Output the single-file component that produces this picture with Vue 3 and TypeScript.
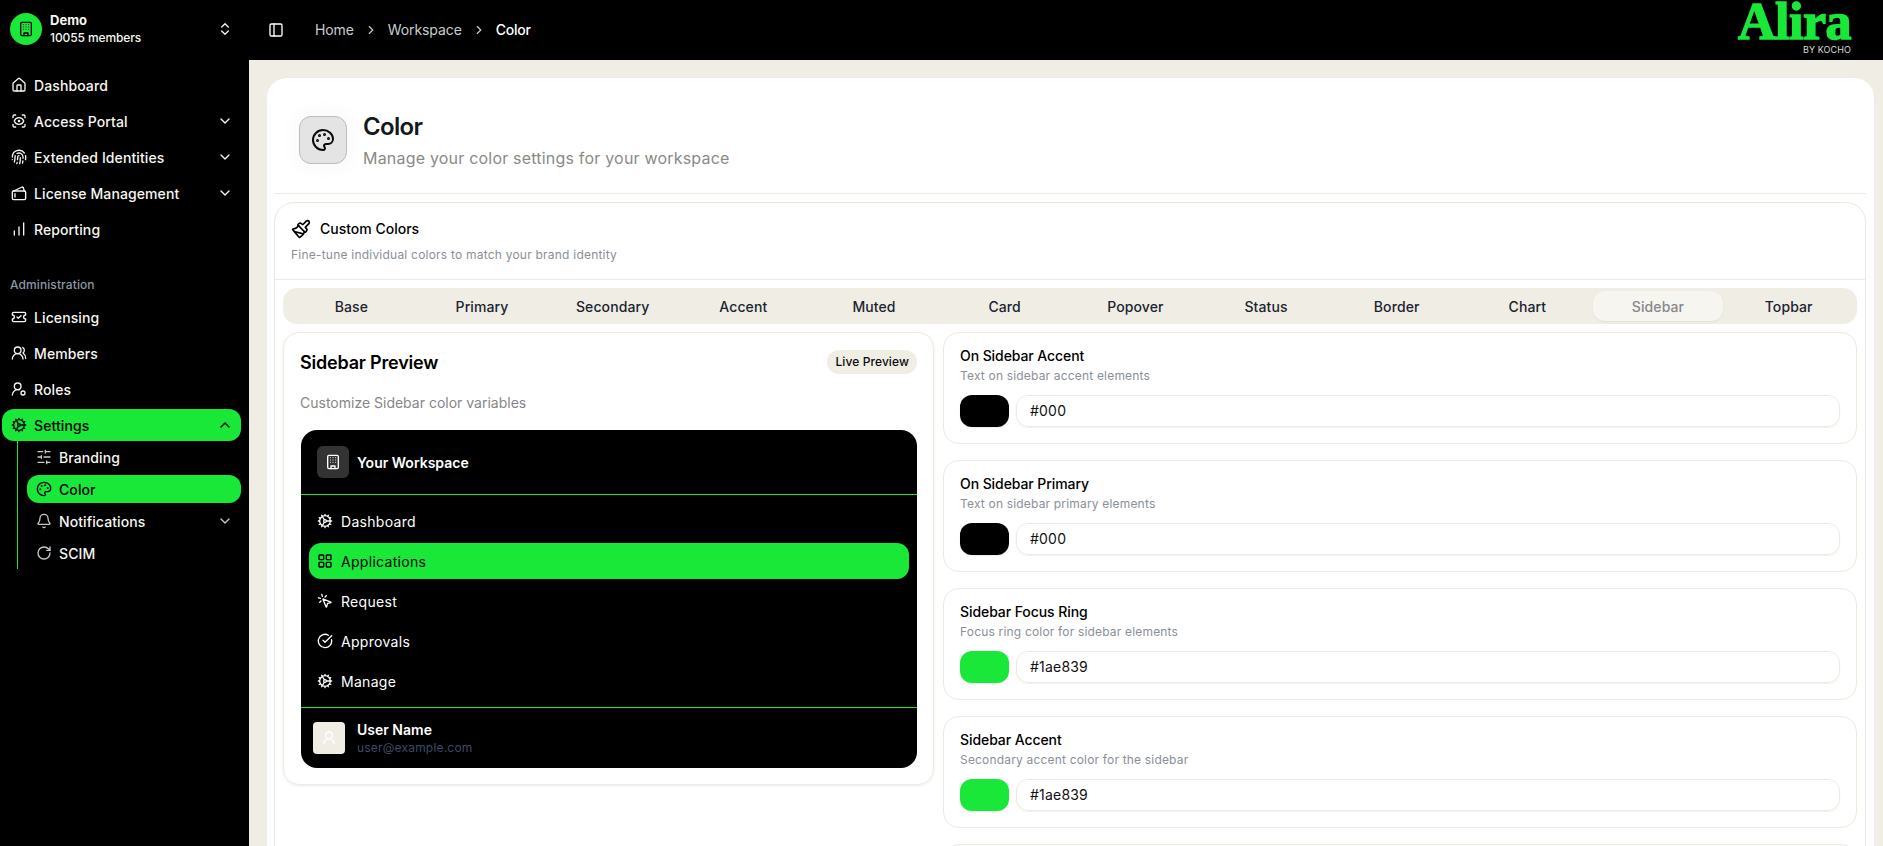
<style scoped>
.layout {
  display: flex;
  height: 846px;
  overflow: hidden;
  background-color: #f0ede5;
  font-family: Inter, 'Open Sans', sans-serif;
  color: #0a0a0a;
}
svg {
  display: block;
  flex: none;
  fill: none;
  stroke: currentColor;
  stroke-width: 2;
  stroke-linecap: round;
  stroke-linejoin: round;
}
.sidebar {
  width: 249px;
  flex: none;
  background-color: #000;
  color: #f7f6f1;
  padding: 13px 8px 0 2px;
  box-sizing: border-box;
}
.workspace {
  display: flex;
  align-items: center;
  height: 32px;
  padding-left: 8px;
  margin-bottom: 24px;
}
.workspace-logo {
  width: 32px;
  height: 32px;
  border-radius: 50%;
  background-color: #1ae839;
  color: #000;
  display: flex;
  align-items: center;
  justify-content: center;
  margin-right: 8px;
}
.workspace-text {
  flex: 1;
  font-size: 12px;
  line-height: 18px;
}
.workspace-name {
  font-weight: 700;
  font-size: 13px;
}
.workspace-members {
  font-weight: 500;
  letter-spacing: -0.1px;
}
.nav-item {
  display: flex;
  align-items: center;
  height: 32px;
  margin-bottom: 4px;
  padding-left: 9px;
  padding-right: 8px;
  border-radius: 12px;
  font-size: 14px;
  font-weight: 500;
  letter-spacing: 0.1px;
}
.nav-item .label {
  flex: 1;
  margin-left: 7px;
}
.nav-item.active {
  background-color: #1ae839;
  color: #000;
}
.group-label {
  margin: 32px 0 8px 8px;
  font-size: 12px;
  line-height: 16px;
  font-weight: 500;
  color: #8d97a6;
  letter-spacing: 0.1px;
}
.sub-nav {
  margin: 0 0 0 15px;
  padding: 2px 0 2px 9px;
  border-left: 1px solid #1ae839;
}
.sub-item {
  display: flex;
  align-items: center;
  height: 28px;
  margin-bottom: 4px;
  padding-left: 9px;
  padding-right: 8px;
  border-radius: 12px;
  font-size: 14px;
  font-weight: 500;
  letter-spacing: 0.1px;
}
.sub-item .label {
  flex: 1;
  margin-left: 7px;
}
.sub-item.active {
  background-color: #1ae839;
  color: #000;
}
.sub-item:last-child {
  margin-bottom: 0;
}
.dim {
  color: #c8c8c8;
}
.main {
  flex: 1;
  min-width: 0;
}
.topbar {
  height: 60px;
  background-color: #000;
  color: #fff;
  display: flex;
  align-items: center;
  padding-left: 19px;
  padding-right: 32px;
}
.crumbs {
  display: flex;
  align-items: center;
  margin-left: 31px;
  padding-bottom: 1px;
  font-size: 14px;
  color: #c9ccd1;
  letter-spacing: -0.1px;
  flex: 1;
}
.crumbs svg {
  margin: 0 10px;
}
.crumbs .current {
  color: #fff;
  font-weight: 500;
  letter-spacing: -0.25px;
}
.logo {
  align-self: flex-start;
  text-align: right;
  height: 60px;
}
.logo-word {
  font-family: 'Liberation Serif', serif;
  font-size: 52px;
  line-height: 40px;
  height: 40px;
  padding-top: 2px;
  font-weight: 700;
  color: #1ae839;
  -webkit-text-stroke: 1.5px #1ae839;
  letter-spacing: -0.5px;
}
.logo-by {
  font-size: 9px;
  line-height: 10px;
  margin-top: 3px;
  color: #d8d8d8;
  letter-spacing: 0.1px;
}
.content {
  padding: 18px 9px 0 18px;
}
.page {
  background-color: #fff;
  border-radius: 20px;
  padding: 0 8px 0 7px;
}
.page-head {
  height: 116px;
  display: flex;
  align-items: center;
  padding: 8px 0 0 25px;
  border-bottom: 1px solid #efeade;
  box-sizing: border-box;
}
.page-icon {
  width: 48px;
  height: 48px;
  box-sizing: border-box;
  border-radius: 12px;
  border: 1px solid #bdbdbd;
  background-color: #e4e4e4;
  display: flex;
  align-items: center;
  justify-content: center;
  margin-right: 16px;
  box-shadow: 0 0 16px 8px rgba(0, 0, 0, 0.02);
}
.page-title {
  font-size: 24px;
  line-height: 32px;
  font-weight: 600;
  color: #141a1c;
  letter-spacing: -0.7px;
}
.page-sub {
  margin-top: 4px;
  font-size: 16px;
  line-height: 22px;
  color: #8a8a86;
  letter-spacing: 0.2px;
}
.custom {
  margin-top: 8px;
  border: 1px solid #e9e8e4;
  border-radius: 20px;
  padding: 0 8px;
}
.custom-head {
  height: 77px;
  margin: 0 -8px;
  padding: 16px 16px 0;
  box-sizing: border-box;
  border-bottom: 1px solid #efeade;
}
.custom-title {
  display: flex;
  align-items: center;
  font-size: 14px;
  line-height: 20px;
  font-weight: 500;
  color: #000;
}
.custom-title svg {
  margin-right: 9px;
}
.custom-desc {
  margin-top: 8px;
  font-size: 12px;
  line-height: 16px;
  color: #8a8f98;
  letter-spacing: 0.22px;
}
.tabs {
  display: grid;
  grid-template-columns: repeat(12, 1fr);
  height: 36px;
  margin-top: 8px;
  padding: 3px;
  box-sizing: border-box;
  background-color: #f0ede5;
  border-radius: 14px;
}
.tab {
  display: flex;
  align-items: center;
  justify-content: center;
  font-size: 14px;
  font-weight: 500;
  color: #1b2430;
  border-radius: 12px;
  letter-spacing: 0.1px;
}
.tab.active {
  background-color: #f7f5f0;
  color: #86888a;
  box-shadow: 0 1px 2px rgba(0, 0, 0, 0.06);
}
.panels {
  display: grid;
  grid-template-columns: 651px 1fr;
  gap: 9px;
  margin-top: 8px;
  align-items: start;
}
.preview-card {
  height: 453px;
  box-sizing: border-box;
  border: 1px solid #efeade;
  border-radius: 16px;
  padding: 16px 16px 0;
  box-shadow: 0 1px 3px rgba(0, 0, 0, 0.08);
}
.preview-head {
  display: flex;
  align-items: center;
  justify-content: space-between;
  height: 26px;
}
.preview-title {
  font-size: 18px;
  font-weight: 600;
  color: #000;
  letter-spacing: -0.2px;
}
.badge {
  background-color: #f0ede5;
  border-radius: 12px;
  padding: 0 8px;
  height: 24px;
  line-height: 24px;
  font-size: 12px;
  font-weight: 500;
  letter-spacing: 0.1px;
}
.preview-sub {
  margin-top: 18px;
  font-size: 14px;
  line-height: 20px;
  color: #86868a;
}
.fake-sidebar {
  margin: 17px 0 0 1px;
  background-color: #000;
  border-radius: 16px;
  height: 338px;
  color: #fff;
  display: flex;
  flex-direction: column;
}
.fake-head {
  height: 65px;
  box-sizing: border-box;
  flex: none;
  display: flex;
  align-items: center;
  padding-left: 16px;
  border-bottom: 1px solid #1ae839;
  font-size: 14px;
  font-weight: 600;
}
.fake-icon {
  width: 32px;
  height: 32px;
  background-color: #333;
  border-radius: 6px;
  display: flex;
  align-items: center;
  justify-content: center;
  margin-right: 8px;
}
.fake-nav {
  flex: 1;
  padding: 8px 8px 0;
  display: flex;
  flex-direction: column;
  gap: 4px;
}
.fake-item {
  display: flex;
  align-items: center;
  height: 36px;
  padding-left: 8px;
  border-radius: 12px;
  font-size: 14px;
  letter-spacing: 0.3px;
}
.fake-item svg {
  margin-right: 8px;
}
.fake-item.active {
  background-color: #1ae839;
  color: #000;
}
.fake-user {
  height: 61px;
  box-sizing: border-box;
  flex: none;
  display: flex;
  align-items: center;
  padding-left: 12px;
  border-top: 1px solid #1ae839;
}
.fake-avatar {
  width: 32px;
  height: 32px;
  background-color: #f0ede5;
  color: #fff;
  border-radius: 4px;
  display: flex;
  align-items: center;
  justify-content: center;
  margin-right: 12px;
}
.fake-name {
  font-size: 14px;
  line-height: 18px;
  font-weight: 600;
  padding-top: 1px;
}
.fake-mail {
  font-size: 12px;
  line-height: 18px;
  color: #3e4a66;
  letter-spacing: 0.2px;
}
.fields {
  display: flex;
  flex-direction: column;
  gap: 16px;
}
.field {
  height: 112px;
  flex: none;
  box-sizing: border-box;
  border: 1px solid #efeade;
  border-radius: 16px;
  padding: 13px 16px 0;
}
.field-title {
  font-size: 14px;
  line-height: 20px;
  font-weight: 500;
  color: #000;
  letter-spacing: -0.08px;
}
.field-desc {
  margin-top: 2px;
  font-size: 12px;
  line-height: 16px;
  color: #8a8f98;
  letter-spacing: 0.18px;
}
.field-row {
  display: flex;
  gap: 7px;
  margin-top: 11px;
}
.swatch {
  width: 49px;
  height: 32px;
  border-radius: 12px;
  box-shadow: 0 1px 2px rgba(0, 0, 0, 0.08);
}
.hex {
  flex: 1;
  height: 32px;
  box-sizing: border-box;
  border: 1px solid #efeade;
  border-radius: 12px;
  padding-left: 13px;
  font-size: 14px;
  line-height: 30px;
  color: #111;
  letter-spacing: 0.2px;
  box-shadow: 0 1px 2px rgba(0, 0, 0, 0.06);
}
</style>

<style>
body {
  overflow: hidden;
}
</style>

<template>
  <div class="layout">
    <aside class="sidebar">
      <div class="workspace">
        <div class="workspace-logo">
          <svg width="16" height="16" viewBox="0 0 24 24" v-html="icons.building"></svg>
        </div>
        <div class="workspace-text">
          <div class="workspace-name">Demo</div>
          <div class="workspace-members">10055 members</div>
        </div>
        <svg width="16" height="16" viewBox="0 0 24 24" style="margin-right: 8px" v-html="icons.updown"></svg>
      </div>

      <div v-for="item in mainNav" :key="item.label" class="nav-item">
        <svg width="16" height="16" viewBox="0 0 24 24" v-html="icons[item.icon]"></svg>
        <span class="label">{{ item.label }}</span>
        <svg v-if="item.more" width="16" height="16" viewBox="0 0 24 24" v-html="icons.down"></svg>
      </div>

      <div class="group-label">Administration</div>

      <div v-for="item in adminNav" :key="item.label" class="nav-item">
        <svg width="16" height="16" viewBox="0 0 24 24" v-html="icons[item.icon]"></svg>
        <span class="label">{{ item.label }}</span>
      </div>
      <div class="nav-item active" style="margin-bottom: 0">
        <svg width="16" height="16" viewBox="0 0 24 24" v-html="icons.cog"></svg>
        <span class="label">Settings</span>
        <svg width="16" height="16" viewBox="0 0 24 24" v-html="icons.up"></svg>
      </div>
      <div class="sub-nav">
        <div v-for="item in settingsNav" :key="item.label" class="sub-item" :class="{ active: item.active }">
          <svg width="16" height="16" viewBox="0 0 24 24" :class="{ dim: !item.active }" v-html="icons[item.icon]"></svg>
          <span class="label">{{ item.label }}</span>
          <svg v-if="item.more" class="dim" width="16" height="16" viewBox="0 0 24 24" v-html="icons.down"></svg>
        </div>
      </div>
    </aside>

    <div class="main">
      <header class="topbar">
        <svg width="16" height="16" viewBox="0 0 24 24" v-html="icons.panel"></svg>
        <nav class="crumbs">
          <span>Home</span>
          <svg width="14" height="14" viewBox="0 0 24 24" v-html="icons.right"></svg>
          <span>Workspace</span>
          <svg width="14" height="14" viewBox="0 0 24 24" v-html="icons.right"></svg>
          <span class="current">Color</span>
        </nav>
        <div class="logo">
          <div class="logo-word">Alira</div>
          <div class="logo-by">BY KOCHO</div>
        </div>
      </header>

      <div class="content">
        <div class="page">
          <div class="page-head">
            <div class="page-icon">
              <svg width="24" height="24" viewBox="0 0 24 24" v-html="icons.palette"></svg>
            </div>
            <div>
              <div class="page-title">Color</div>
              <div class="page-sub">Manage your color settings for your workspace</div>
            </div>
          </div>

          <section class="custom">
            <div class="custom-head">
              <div class="custom-title">
                <svg width="20" height="20" viewBox="0 0 24 24" v-html="icons.brush"></svg>
                Custom Colors
              </div>
              <div class="custom-desc">Fine-tune individual colors to match your brand identity</div>
            </div>

            <div class="tabs">
              <div v-for="tab in tabs" :key="tab" class="tab" :class="{ active: tab === 'Sidebar' }">{{ tab }}</div>
            </div>

            <div class="panels">
              <div class="preview-card">
                <div class="preview-head">
                  <div class="preview-title">Sidebar Preview</div>
                  <div class="badge">Live Preview</div>
                </div>
                <div class="preview-sub">Customize Sidebar color variables</div>
                <div class="fake-sidebar">
                  <div class="fake-head">
                    <div class="fake-icon">
                      <svg width="16" height="16" viewBox="0 0 24 24" v-html="icons.building"></svg>
                    </div>
                    Your Workspace
                  </div>
                  <div class="fake-nav">
                    <div v-for="item in previewNav" :key="item.label" class="fake-item" :class="{ active: item.active }">
                      <svg width="16" height="16" viewBox="0 0 24 24" v-html="icons[item.icon]"></svg>
                      {{ item.label }}
                    </div>
                  </div>
                  <div class="fake-user">
                    <div class="fake-avatar">
                      <svg width="16" height="16" viewBox="0 0 24 24" v-html="icons.user"></svg>
                    </div>
                    <div>
                      <div class="fake-name">User Name</div>
                      <div class="fake-mail">user@example.com</div>
                    </div>
                  </div>
                </div>
              </div>

              <div class="fields">
                <div v-for="field in fields" :key="field.title" class="field">
                  <div class="field-title">{{ field.title }}</div>
                  <div class="field-desc">{{ field.desc }}</div>
                  <div class="field-row">
                    <div class="swatch" :style="{ backgroundColor: field.value }"></div>
                    <div class="hex">{{ field.value }}</div>
                  </div>
                </div>
                <!-- next card only peeks in at the bottom of the window -->
                <div class="field"></div>
              </div>
            </div>
          </section>
        </div>
      </div>
    </div>
  </div>
</template>

<script setup lang="ts">
defineOptions({
  name: 'App',
});

const icons: Record<string, string> = {
  building:
    '<rect width="16" height="20" x="4" y="2" rx="2"/><path d="M9 22v-4h6v4"/><path stroke-width="1.5" d="M8 5.5h.01M12 5.5h.01M16 5.5h.01M8 9h.01M12 9h.01M16 9h.01M8 12.5h.01M12 12.5h.01M16 12.5h.01"/>',
  updown: '<path d="m7 15 5 5 5-5M7 9l5-5 5 5"/>',
  down: '<path d="m6 9 6 6 6-6"/>',
  up: '<path d="m18 15-6-6-6 6"/>',
  right: '<path d="m9 18 6-6-6-6"/>',
  house:
    '<path d="M15 21v-8a1 1 0 0 0-1-1h-4a1 1 0 0 0-1 1v8"/><path d="M3 10a2 2 0 0 1 .709-1.528l7-5.999a2 2 0 0 1 2.582 0l7 5.999A2 2 0 0 1 21 10v9a2 2 0 0 1-2 2H5a2 2 0 0 1-2-2z"/>',
  scan:
    '<path d="M3 7V5a2 2 0 0 1 2-2h2M17 3h2a2 2 0 0 1 2 2v2M21 17v2a2 2 0 0 1-2 2h-2M7 21H5a2 2 0 0 1-2-2v-2"/><circle cx="12" cy="12" r="1"/><path d="M18.944 12.33a1 1 0 0 0 0-.66 7.5 7.5 0 0 0-13.888 0 1 1 0 0 0 0 .66 7.5 7.5 0 0 0 13.888 0"/>',
  finger:
    '<path d="M12 10a2 2 0 0 0-2 2c0 1.02-.1 2.51-.26 4M14 13.12c0 2.38 0 6.38-1 8.88M17.29 21.02c.12-.6.43-2.3.5-3.02M2 12a10 10 0 0 1 18-6M2 16h.01M21.8 16c.2-2 .131-5.354 0-6M5 19.5C5.5 18 6 15 6 12a6 6 0 0 1 .34-2M8.65 22c.21-.66.45-1.32.57-2M9 6.8a6 6 0 0 1 9 5.2v2"/>',
  wallet:
    '<rect width="20" height="13" x="2" y="9" rx="2"/><path d="M4 9 16 3.4A1.5 1.5 0 0 1 18.5 4.5L20 9"/><path d="M6 13v5"/>',
  chart: '<path d="M5 21v-6M12 21V9M19 21V3"/>',
  ticket:
    '<path d="M2 9a3 3 0 0 1 0 6v2a2 2 0 0 0 2 2h16a2 2 0 0 0 2-2v-2a3 3 0 0 1 0-6V7a2 2 0 0 0-2-2H4a2 2 0 0 0-2 2Z"/><path d="m9 12 2 2 4-4"/>',
  users:
    '<path d="M18 21a8 8 0 0 0-16 0"/><circle cx="10" cy="8" r="5"/><path d="M22 20c0-3.37-2-6.5-4-8a5 5 0 0 0-.45-8.3"/>',
  roles: '<path d="M2 21a8 8 0 0 1 10.434-7.62"/><circle cx="10" cy="8" r="5"/><circle cx="18" cy="18" r="3"/>',
  cog:
    '<path d="M12 20a8 8 0 1 0 0-16 8 8 0 0 0 0 16ZM12 14a2 2 0 1 0 0-4 2 2 0 0 0 0 4ZM12 2v2M12 22v-2M17 20.66l-1-1.73M11 10.27 7 3.34M20.66 17l-1.73-1M3.34 7l1.73 1M14 12h8M2 12h2M20.66 7l-1.73 1M3.34 17l1.73-1M17 3.34l-1 1.73M11 13.73l-4 6.93"/>',
  sliders:
    '<path d="M21 4h-7M10 4H3M21 12h-9M8 12H3M21 20h-5M12 20H3M14 2v4M8 10v4M16 18v4"/>',
  palette:
    '<path d="M12 22a1 1 0 0 1 0-20 10 9 0 0 1 10 9 5 5 0 0 1-5 5h-2.25a1.75 1.75 0 0 0-1.4 2.8l.3.4a1.75 1.75 0 0 1-1.4 2.8z"/><circle cx="13.5" cy="6.5" r=".5" fill="currentColor"/><circle cx="17.5" cy="10.5" r=".5" fill="currentColor"/><circle cx="6.5" cy="12.5" r=".5" fill="currentColor"/><circle cx="8.5" cy="7.5" r=".5" fill="currentColor"/>',
  bell:
    '<path d="M10.268 21a2 2 0 0 0 3.464 0"/><path d="M3.262 15.326A1 1 0 0 0 4 17h16a1 1 0 0 0 .74-1.673C19.41 13.956 18 12.499 18 8A6 6 0 0 0 6 8c0 4.499-1.411 5.956-2.738 7.326"/>',
  rotate: '<path d="M21 12a9 9 0 1 1-9-9c2.52 0 4.93 1 6.74 2.74L21 8"/><path d="M21 3v5h-5"/>',
  panel: '<rect width="18" height="18" x="3" y="3" rx="2"/><path d="M9 3v18"/>',
  brush:
    '<path d="m14.622 17.897-10.68-2.913"/><path d="M18.376 2.622a1 1 0 1 1 3.002 3.002L17.36 9.643a.5.5 0 0 0 0 .707l.944.944a2.41 2.41 0 0 1 0 3.408l-.944.944a.5.5 0 0 1-.707 0L8.354 7.348a.5.5 0 0 1 0-.707l.944-.944a2.41 2.41 0 0 1 3.408 0l.944.944a.5.5 0 0 0 .707 0z"/><path d="M9 8c-1.804 2.71-3.97 3.46-6.583 3.948a.507.507 0 0 0-.302.819l7.32 8.883a1 1 0 0 0 1.185.204C12.735 20.405 16 16.792 16 15"/>',
  grid:
    '<rect width="7" height="7" x="3" y="3" rx="1"/><rect width="7" height="7" x="14" y="3" rx="1"/><rect width="7" height="7" x="14" y="14" rx="1"/><rect width="7" height="7" x="3" y="14" rx="1"/>',
  click:
    '<path d="M14 4.1 12 6M5.1 8l-2.9-.8M6 12l-1.9 2M7.2 2.2 8 5.1"/><path d="M9.037 9.69a.498.498 0 0 1 .653-.653l11 4.5a.5.5 0 0 1-.074.949l-4.349 1.041a1 1 0 0 0-.74.739l-1.04 4.35a.5.5 0 0 1-.95.074z"/>',
  check: '<path d="M21.801 10A10 10 0 1 1 17 3.335"/><path d="m9 11 3 3L22 4"/>',
  user: '<circle cx="12" cy="8" r="5"/><path d="M20 21a8 8 0 0 0-16 0"/>',
};

const mainNav = [
  { label: 'Dashboard', icon: 'house' },
  { label: 'Access Portal', icon: 'scan', more: true },
  { label: 'Extended Identities', icon: 'finger', more: true },
  { label: 'License Management', icon: 'wallet', more: true },
  { label: 'Reporting', icon: 'chart' },
];

const adminNav = [
  { label: 'Licensing', icon: 'ticket' },
  { label: 'Members', icon: 'users' },
  { label: 'Roles', icon: 'roles' },
];

const settingsNav = [
  { label: 'Branding', icon: 'sliders' },
  { label: 'Color', icon: 'palette', active: true },
  { label: 'Notifications', icon: 'bell', more: true },
  { label: 'SCIM', icon: 'rotate' },
];

const tabs = [
  'Base',
  'Primary',
  'Secondary',
  'Accent',
  'Muted',
  'Card',
  'Popover',
  'Status',
  'Border',
  'Chart',
  'Sidebar',
  'Topbar',
];

const previewNav = [
  { label: 'Dashboard', icon: 'cog' },
  { label: 'Applications', icon: 'grid', active: true },
  { label: 'Request', icon: 'click' },
  { label: 'Approvals', icon: 'check' },
  { label: 'Manage', icon: 'cog' },
];

const fields = [
  { title: 'On Sidebar Accent', desc: 'Text on sidebar accent elements', value: '#000' },
  { title: 'On Sidebar Primary', desc: 'Text on sidebar primary elements', value: '#000' },
  { title: 'Sidebar Focus Ring', desc: 'Focus ring color for sidebar elements', value: '#1ae839' },
  { title: 'Sidebar Accent', desc: 'Secondary accent color for the sidebar', value: '#1ae839' },
];
</script>
